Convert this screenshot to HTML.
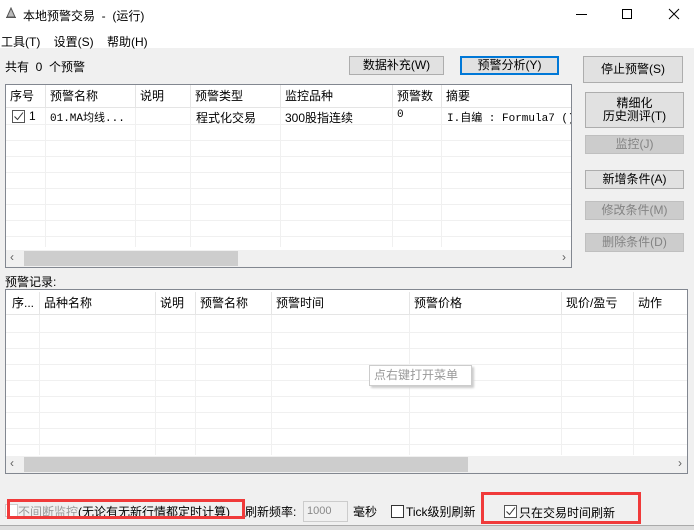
<!DOCTYPE html><html><head><meta charset="utf-8"><style>
*{margin:0;padding:0;box-sizing:border-box}
body{width:694px;height:530px;overflow:hidden;background:#f0f0f0;font:12px "Liberation Sans","Noto Sans CJK SC",sans-serif;color:#000;position:relative}
.a{position:absolute;white-space:nowrap}
.btn{position:absolute;background:#e1e1e1;border:1px solid #adadad;text-align:center;font-size:12px;display:flex;align-items:center;justify-content:center;line-height:13px}
.dis{background:#cccccc;border-color:#bfbfbf;color:#838383}
.list{position:absolute;background:#fff;border:1px solid #828790}
.hd{position:absolute;top:0;height:22px;border-right:1px solid #e5e5e5;padding-left:4px;line-height:22px;background:#fff}
.vl{position:absolute;width:1px;background:#f0f0f0}
.hl{position:absolute;height:1px;background:#f0f0f0;left:0;right:0}
.sb{position:absolute;left:0;right:0;height:17px;background:#f0f0f0}
.th{position:absolute;top:1px;height:15px;background:#cdcdcd}
.cb{position:absolute;width:13px;height:13px;border:1px solid #333;background:#fff}
</style></head><body>
<div class="a" style="left:0;top:0;width:694px;height:48px;background:#fff"></div>
<svg class="a" style="left:5px;top:7px" width="12" height="12"><path d="M2 10 L6 1 L10 10 Z M1 10.5 H11" stroke="#555" fill="#bbb" stroke-width="1"/></svg>
<div class="a" style="left:23px;top:7px">本地预警交易 &nbsp;- &nbsp;(运行)</div>
<svg class="a" style="left:574px;top:8px" width="110" height="14"><path d="M2 6.5h11" stroke="#000"/><path d="M48.5 1.5h9v9h-9z" stroke="#000" fill="none"/><path d="M95 1l10 10M105 1l-10 10" stroke="#000"/></svg>
<div class="a" style="left:1px;top:33px">工具(T) &nbsp;&nbsp; 设置(S) &nbsp;&nbsp; 帮助(H)</div>
<div class="a" style="left:5px;top:58px">共有 &nbsp;0 &nbsp;个预警</div>
<div class="btn" style="left:349px;top:56px;width:95px;height:19px">数据补充(W)</div>
<div class="btn" style="left:460px;top:56px;width:99px;height:19px;border:2px solid #0078d7">预警分析(Y)</div>
<div class="btn" style="left:583px;top:56px;width:100px;height:27px">停止预警(S)</div>
<div class="btn" style="left:585px;top:92px;width:99px;height:36px">精细化<br>历史测评(T)</div>
<div class="btn dis" style="left:585px;top:135px;width:99px;height:19px">监控(J)</div>
<div class="btn" style="left:585px;top:170px;width:99px;height:19px">新增条件(A)</div>
<div class="btn dis" style="left:585px;top:201px;width:99px;height:19px">修改条件(M)</div>
<div class="btn dis" style="left:585px;top:233px;width:99px;height:19px">删除条件(D)</div>

<div class="list" style="left:5px;top:84px;width:567px;height:184px;overflow:hidden">
<div class="vl" style="left:39px;top:22px;height:140px"></div><div class="vl" style="left:129px;top:22px;height:140px"></div><div class="vl" style="left:184px;top:22px;height:140px"></div><div class="vl" style="left:274px;top:22px;height:140px"></div><div class="vl" style="left:386px;top:22px;height:140px"></div><div class="vl" style="left:435px;top:22px;height:140px"></div>
<div class="hl" style="top:39px"></div><div class="hl" style="top:55px"></div><div class="hl" style="top:71px"></div><div class="hl" style="top:87px"></div><div class="hl" style="top:103px"></div><div class="hl" style="top:119px"></div><div class="hl" style="top:135px"></div><div class="hl" style="top:151px"></div>
<div class="hd" style="left:0;width:40px">序号</div><div class="hd" style="left:40px;width:90px">预警名称</div><div class="hd" style="left:130px;width:55px">说明</div><div class="hd" style="left:185px;width:90px">预警类型</div><div class="hd" style="left:275px;width:112px">监控品种</div><div class="hd" style="left:387px;width:49px">预警数</div><div class="hd" style="left:436px;width:140px;border:0">摘要</div>
<div class="hl" style="top:22px;background:#e5e5e5"></div>
<div class="cb" style="left:6px;top:25px;border-color:#555"><svg width="11" height="11" style="position:absolute;left:0;top:0"><path d="M1.5 5.5l3 3 5.5-7" stroke="#333" fill="none"/></svg></div>
<div class="a" style="left:23px;top:24px">1</div>
<div class="a" style="left:44px;top:24px;font-family:'Liberation Mono','Noto Sans CJK SC',monospace;font-size:11px">01.MA均线...</div>
<div class="a" style="left:190px;top:24px">程式化交易</div>
<div class="a" style="left:279px;top:24px">300股指连续</div>
<div class="a" style="left:391px;top:24px;font-family:'Liberation Mono',monospace;font-size:11px">0</div>
<div class="a" style="left:441px;top:24px;font-family:'Liberation Mono','Noto Sans CJK SC',monospace;font-size:11px">I.自编 : Formula7 ()</div>
<div class="sb" style="top:165px"><div class="th" style="left:18px;width:214px"></div><span class="a" style="left:4px;top:0;color:#606060">‹</span><span class="a" style="right:5px;top:0;color:#606060">›</span></div>
</div>

<div class="a" style="left:5px;top:273px">预警记录:</div>
<div class="list" style="left:5px;top:289px;width:683px;height:185px;overflow:hidden">
<div class="vl" style="left:33px;top:25px;height:140px"></div><div class="vl" style="left:149px;top:25px;height:140px"></div><div class="vl" style="left:189px;top:25px;height:140px"></div><div class="vl" style="left:265px;top:25px;height:140px"></div><div class="vl" style="left:403px;top:25px;height:140px"></div><div class="vl" style="left:555px;top:25px;height:140px"></div><div class="vl" style="left:627px;top:25px;height:140px"></div>
<div class="hl" style="top:42px"></div><div class="hl" style="top:58px"></div><div class="hl" style="top:74px"></div><div class="hl" style="top:90px"></div><div class="hl" style="top:106px"></div><div class="hl" style="top:122px"></div><div class="hl" style="top:138px"></div><div class="hl" style="top:154px"></div>
<div style="position:absolute;left:0;top:0;right:0;height:25px;background:#fff;border-bottom:1px solid #e5e5e5;padding-top:2px">
<div class="hd" style="left:2px;width:32px;top:2px">序...</div><div class="hd" style="left:34px;width:116px;top:2px">品种名称</div><div class="hd" style="left:150px;width:40px;top:2px">说明</div><div class="hd" style="left:190px;width:76px;top:2px">预警名称</div><div class="hd" style="left:266px;width:138px;top:2px">预警时间</div><div class="hd" style="left:404px;width:152px;top:2px">预警价格</div><div class="hd" style="left:556px;width:72px;top:2px">现价/盈亏</div><div class="hd" style="left:628px;width:60px;top:2px;border:0">动作</div>
</div>
<div class="a" style="left:363px;top:75px;width:103px;height:21px;border:1px solid #ccc;background:#fff;color:#999;line-height:19px;padding-left:4px;box-shadow:2px 2px 2px #ccc">点右键打开菜单</div>
<div class="sb" style="top:166px"><div class="th" style="left:18px;width:444px"></div><span class="a" style="left:4px;top:0;color:#606060">‹</span><span class="a" style="right:5px;top:0;color:#606060">›</span></div>
</div>

<div class="cb" style="left:5px;top:504px;border-color:#ccc"></div>
<div class="a" style="left:18px;top:503px;color:#999">不间断监控</div>
<div class="a" style="left:78px;top:503px">(无论有无新行情都定时计算)</div>
<div class="a" style="left:245px;top:503px">刷新频率:</div>
<div class="a" style="left:303px;top:501px;width:45px;height:21px;border:1px solid #ccc;background:#f0f0f0;color:#888;padding:3px 0 0 3px;font-size:11px">1000</div>
<div class="a" style="left:353px;top:503px">毫秒</div>
<div class="cb" style="left:391px;top:505px"></div>
<div class="a" style="left:406px;top:503px">Tick级别刷新</div>
<div class="cb" style="left:504px;top:505px;border-color:#555"><svg width="11" height="11" style="position:absolute;left:0;top:0"><path d="M1.5 5.5l3 3 5.5-7" stroke="#333" fill="none"/></svg></div>
<div class="a" style="left:519px;top:504px">只在交易时间刷新</div>
<div class="a" style="left:7px;top:499px;width:238px;height:20px;border:3px solid #f03a3a"></div>
<div class="a" style="left:481px;top:492px;width:160px;height:32px;border:3px solid #f03a3a"></div>
<div class="a" style="left:0;top:525px;width:694px;height:5px;background:#ddd;border-top:1px solid #aaa"></div>
</body></html>
